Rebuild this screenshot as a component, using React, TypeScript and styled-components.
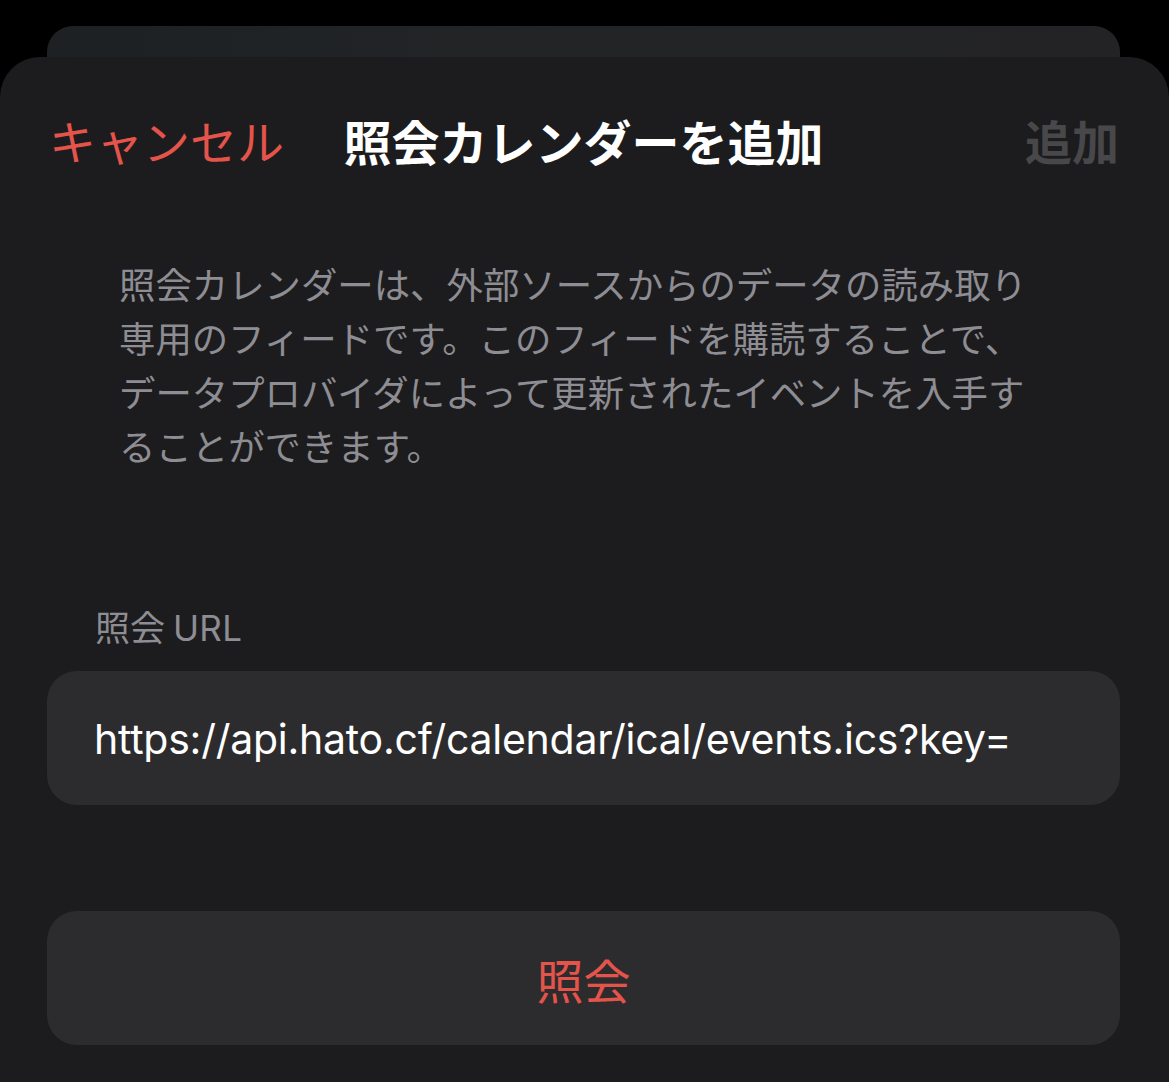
import React from 'react';
import styled, { createGlobalStyle } from 'styled-components';

const GlobalStyle = createGlobalStyle`
  html, body {
    margin: 0;
    padding: 0;
    background: #000;
  }
  body {
    font-family: "Noto Sans CJK JP", "Noto Sans", sans-serif;
    -webkit-font-smoothing: antialiased;
  }
`;

const Page = styled.div`
  width: 1169px;
  height: 1082px;
  padding-top: 26px;
  box-sizing: border-box;
  background: #000;
  overflow: hidden;
  display: flex;
  flex-direction: column;
`;

const BackCard = styled.div`
  height: 31px;
  margin: 0 49px 0 47px;
  border-radius: 26px 26px 0 0;
  background: linear-gradient(90deg, #1d2124 0%, #222426 40%, #232325 100%);
`;

const Sheet = styled.div`
  flex: 1;
  border-radius: 40px 40px 0 0;
  background: #1c1c1e;
  padding: 0 49px 0 47px;
  display: flex;
  flex-direction: column;
`;

const NavBar = styled.div`
  margin-top: 53px;
  height: 60px;
  display: grid;
  grid-template-columns: 1fr auto 1fr;
  align-items: center;
`;

const NavButton = styled.div<{ $align: 'left' | 'right'; $disabled?: boolean }>`
  justify-self: ${(p) => (p.$align === 'left' ? 'start' : 'end')};
  padding: ${(p) => (p.$align === 'left' ? '0 0 0 2px' : '0 1px 0 0')};
  font-size: 47px;
  line-height: 60px;
  font-weight: ${(p) => (p.$disabled ? 700 : 400)};
  color: ${(p) => (p.$disabled ? '#48484a' : '#e5544a')};
  white-space: nowrap;
`;

const Title = styled.div`
  font-size: 48px;
  line-height: 60px;
  font-weight: 700;
  color: #fff;
  white-space: nowrap;
`;

const Description = styled.p`
  margin: 86px 0 0;
  padding-left: 72px;
  width: 25.3em;
  font-size: 36.4px;
  line-height: 54px;
  color: #8d8d93;
`;

const FieldLabel = styled.div`
  margin-top: 134px;
  padding-left: 48px;
  font-family: Inter, "Noto Sans CJK JP", sans-serif;
  font-size: 35px;
  line-height: 44px;
  color: #8d8d93;
`;

const Latin = styled.span`
  margin-left: 8px;
  letter-spacing: 0.3px;
`;

const Field = styled.div`
  margin-top: 21px;
  height: 134px;
  border-radius: 30px;
  background: #2c2c2e;
  display: flex;
  align-items: center;
  padding: 2px 0 0 47px;
  box-sizing: border-box;
  font-family: Inter, "Noto Sans", sans-serif;
  font-size: 41px;
  letter-spacing: -0.25px;
  color: #fff;
  white-space: nowrap;
  overflow: hidden;
`;

const ActionButton = styled.div`
  margin-top: 106px;
  height: 134px;
  border-radius: 30px;
  background: #2c2c2e;
  display: flex;
  align-items: center;
  justify-content: center;
  font-size: 47px;
  color: #e5544a;
`;

const App: React.FC = () => (
  <>
    <GlobalStyle />
    <Page>
      <BackCard />
      <Sheet>
        <NavBar>
          <NavButton $align="left">キャンセル</NavButton>
          <Title>照会カレンダーを追加</Title>
          <NavButton $align="right" $disabled>
            追加
          </NavButton>
        </NavBar>
        <Description>
          照会カレンダーは、外部ソースからのデータの読み取り専用のフィードです。このフィードを購読することで、データプロバイダによって更新されたイベントを入手することができます。
        </Description>
        <FieldLabel>
          照会<Latin>URL</Latin>
        </FieldLabel>
        <Field>https://api.hato.cf/calendar/ical/events.ics?key=</Field>
        <ActionButton>照会</ActionButton>
      </Sheet>
    </Page>
  </>
);

export default App;
